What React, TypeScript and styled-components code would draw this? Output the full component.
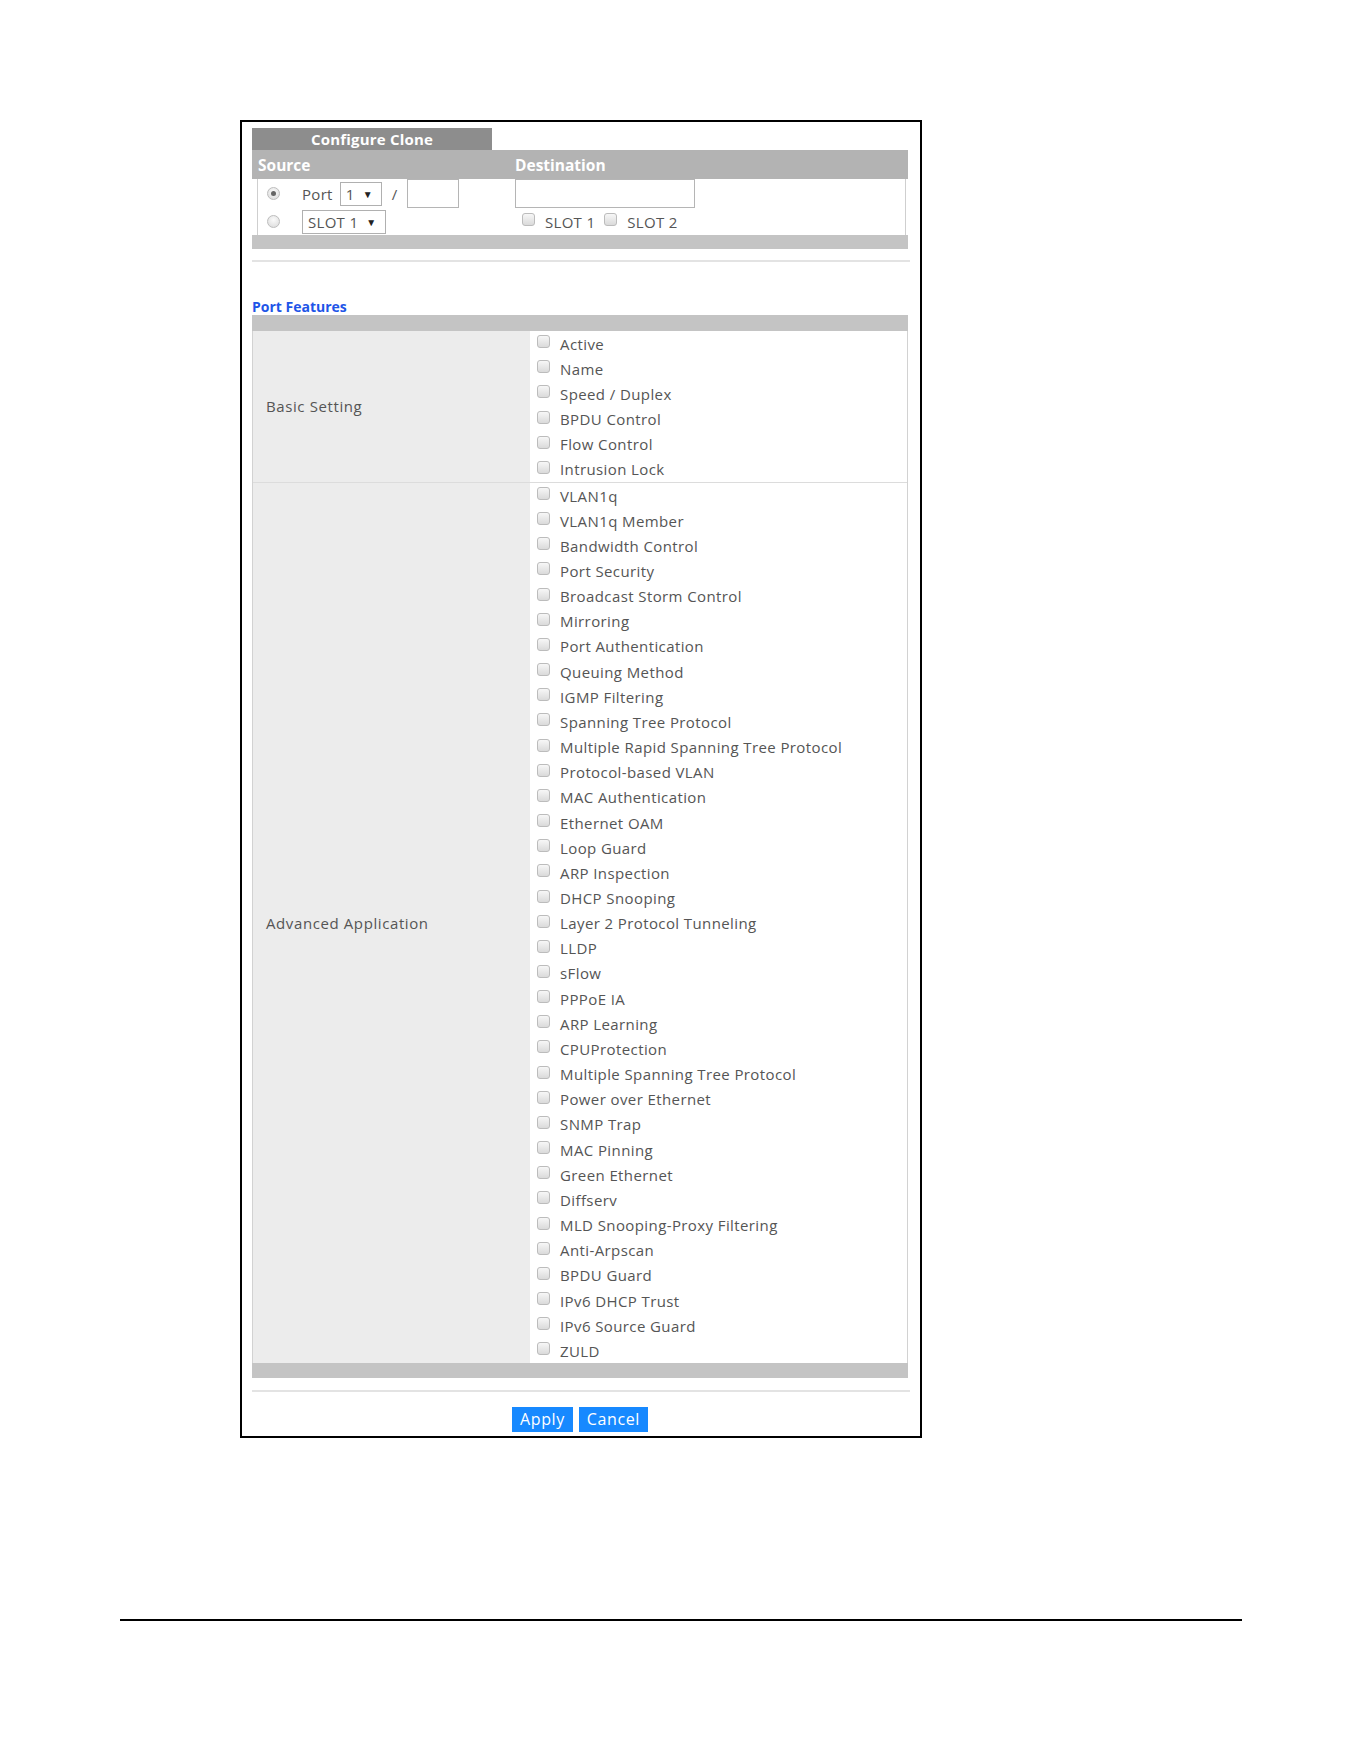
import React from 'react';
import styled, { createGlobalStyle } from 'styled-components';

const GlobalStyle = createGlobalStyle`
  body {
    margin: 0;
    background: #fff;
    font-family: "Open Sans", "Liberation Sans", sans-serif;
  }
`;

const basicItems = ['Active', 'Name', 'Speed / Duplex', 'BPDU Control', 'Flow Control', 'Intrusion Lock'];

const advancedItems = [
  'VLAN1q',
  'VLAN1q Member',
  'Bandwidth Control',
  'Port Security',
  'Broadcast Storm Control',
  'Mirroring',
  'Port Authentication',
  'Queuing Method',
  'IGMP Filtering',
  'Spanning Tree Protocol',
  'Multiple Rapid Spanning Tree Protocol',
  'Protocol-based VLAN',
  'MAC Authentication',
  'Ethernet OAM',
  'Loop Guard',
  'ARP Inspection',
  'DHCP Snooping',
  'Layer 2 Protocol Tunneling',
  'LLDP',
  'sFlow',
  'PPPoE IA',
  'ARP Learning',
  'CPUProtection',
  'Multiple Spanning Tree Protocol',
  'Power over Ethernet',
  'SNMP Trap',
  'MAC Pinning',
  'Green Ethernet',
  'Diffserv',
  'MLD Snooping-Proxy Filtering',
  'Anti-Arpscan',
  'BPDU Guard',
  'IPv6 DHCP Trust',
  'IPv6 Source Guard',
  'ZULD',
];

const Page = styled.div`
  padding: 120px 0 0 240px;
  height: 1761px;
  box-sizing: border-box;
`;

const Frame = styled.div`
  width: 682px;
  box-sizing: border-box;
  border: 2px solid #000;
  padding: 6px 12px 4px 10px;
`;

const Tab = styled.div`
  width: 240px;
  height: 22px;
  background: #8d8d8d;
  color: #fff;
  font-weight: 700;
  font-size: 15px;
  letter-spacing: 0.2px;
  display: flex;
  align-items: center;
  justify-content: center;
`;

const HeaderBar = styled.div`
  display: grid;
  grid-template-columns: 263px 1fr;
  height: 29px;
  align-items: center;
  background: #b3b3b3;
  color: #fff;
  font-weight: 700;
  font-size: 15.5px;
`;

const HeaderCell = styled.div<{ $pad: number }>`
  padding-left: ${(p) => p.$pad}px;
`;

const CloneBody = styled.div`
  margin: 0 2px 0 5px;
  border-left: 1px solid #cfcfcf;
  border-right: 1px solid #cfcfcf;
`;

const CloneRow = styled.div<{ $h: number }>`
  display: grid;
  grid-template-columns: 257px 1fr;
  height: ${(p) => p.$h}px;
  align-items: center;
  font-size: 15px;
  letter-spacing: 0.3px;
  color: #555;
`;

const Cell = styled.div`
  display: flex;
  align-items: center;
`;

const SourceCell = styled(Cell)`
  padding-left: 9px;
`;

const Radio = styled.span<{ $checked?: boolean }>`
  width: 13px;
  height: 13px;
  border-radius: 50%;
  box-sizing: border-box;
  border: 1px solid #bdbdbd;
  background: radial-gradient(circle at 50% 35%, #fafafa, #d9d9d9);
  display: inline-flex;
  align-items: center;
  justify-content: center;
  margin-right: 22px;
  &::after {
    content: '';
    width: 5px;
    height: 5px;
    border-radius: 50%;
    background: ${(p) => (p.$checked ? '#666' : 'transparent')};
  }
`;

const Label = styled.span`
  margin-right: 7px;
`;

const SelectBox = styled.span<{ $w: number }>`
  width: ${(p) => p.$w}px;
  height: 24px;
  box-sizing: border-box;
  border: 1px solid #b0b0b0;
  background: #fff;
  display: inline-flex;
  align-items: center;
  padding-left: 5px;
  font-size: 15px;
  color: #555;
  &::after {
    content: '▼';
    font-size: 10px;
    color: #222;
    margin-left: 8px;
  }
`;

const Slash = styled.span`
  margin: 0 9px 0 10px;
`;

const TextBox = styled.span<{ $w: number }>`
  width: ${(p) => p.$w}px;
  height: 29px;
  box-sizing: border-box;
  border: 1px solid #b5b5b5;
  background: #fff;
`;

const Check = styled.span`
  width: 13px;
  height: 13px;
  box-sizing: border-box;
  border: 1px solid #bcbcbc;
  border-radius: 3px;
  background: linear-gradient(#f7f7f7, #dadada);
  flex-shrink: 0;
`;

const DestCheck = styled(Check)`
  margin: 0 10px 4px 7px;
`;

const DestLabel = styled.span`
  margin-right: 2px;
`;

const FooterBar = styled.div<{ $h: number }>`
  height: ${(p) => p.$h}px;
  background: #c4c4c4;
`;

const Separator = styled.div<{ $top: number }>`
  margin-top: ${(p) => p.$top}px;
  height: 2px;
  background: #e3e3e3;
  width: 658px;
`;

const SectionTitle = styled.div`
  margin-top: 36px;
  height: 17px;
  font-size: 14px;
  font-weight: 700;
  color: #1e55e8;
  line-height: 17px;
`;

const TableHead = styled.div`
  height: 16px;
  background: #c4c4c4;
`;

const FeatureTable = styled.div`
  border-left: 1px solid #d2d2d2;
  border-right: 1px solid #d2d2d2;
`;

const FeatureRow = styled.div<{ $last?: boolean }>`
  display: grid;
  grid-template-columns: 277px 1fr;
  border-bottom: ${(p) => (p.$last ? 'none' : '1px solid #dcdcdc')};
`;

const GroupLabel = styled.div`
  background: #ececec;
  display: flex;
  align-items: center;
  padding-left: 13px;
  font-size: 15px;
  letter-spacing: 0.6px;
  color: #555;
`;

const ItemList = styled.div`
  display: flex;
  flex-direction: column;
  background: #fff;
`;

const Item = styled.div`
  height: 25.17px;
  display: flex;
  align-items: center;
  padding-left: 7px;
  font-size: 15px;
  letter-spacing: 0.4px;
  color: #555;
`;

const ItemCheck = styled(Check)`
  margin: 0 10px 4px 0;
`;

const ButtonRow = styled.div`
  display: flex;
  justify-content: center;
  gap: 6px;
  padding: 15px 0 0 0;
`;

const Button = styled.button`
  height: 25px;
  border: none;
  border-radius: 0;
  background: #1789ff;
  color: #fff;
  font-family: "Open Sans", "Liberation Sans", sans-serif;
  font-size: 16px;
  letter-spacing: 0.6px;
  padding: 0 8px;
  line-height: 25px;
`;

const BottomRule = styled.div`
  margin: 181px 0 0 -120px;
  width: 1122px;
  height: 2px;
  background: #000;
`;

function FeatureGroup({ label, items, last }: { label: string; items: string[]; last?: boolean }) {
  return (
    <FeatureRow $last={last}>
      <GroupLabel>{label}</GroupLabel>
      <ItemList>
        {items.map((item) => (
          <Item key={item}>
            <ItemCheck />
            {item}
          </Item>
        ))}
      </ItemList>
    </FeatureRow>
  );
}

function App() {
  return (
    <Page>
      <GlobalStyle />
      <Frame>
        <Tab>Configure Clone</Tab>
        <HeaderBar>
          <HeaderCell $pad={6}>Source</HeaderCell>
          <HeaderCell $pad={0}>Destination</HeaderCell>
        </HeaderBar>
        <CloneBody>
          <CloneRow $h={29}>
            <SourceCell>
              <Radio $checked />
              <Label>Port</Label>
              <SelectBox $w={42}>1</SelectBox>
              <Slash>/</Slash>
              <TextBox $w={52} />
            </SourceCell>
            <Cell>
              <TextBox $w={180} />
            </Cell>
          </CloneRow>
          <CloneRow $h={27}>
            <SourceCell>
              <Radio />
              <SelectBox $w={84}>SLOT 1</SelectBox>
            </SourceCell>
            <Cell>
              <DestCheck />
              <DestLabel>SLOT 1</DestLabel>
              <DestCheck />
              <DestLabel>SLOT 2</DestLabel>
            </Cell>
          </CloneRow>
        </CloneBody>
        <FooterBar $h={14} />
        <Separator $top={11} />

        <SectionTitle>Port Features</SectionTitle>
        <TableHead />
        <FeatureTable>
          <FeatureGroup label="Basic Setting" items={basicItems} />
          <FeatureGroup label="Advanced Application" items={advancedItems} last />
        </FeatureTable>
        <FooterBar $h={15} />
        <Separator $top={12} />
        <ButtonRow>
          <Button>Apply</Button>
          <Button>Cancel</Button>
        </ButtonRow>
      </Frame>
      <BottomRule />
    </Page>
  );
}

export default App;
